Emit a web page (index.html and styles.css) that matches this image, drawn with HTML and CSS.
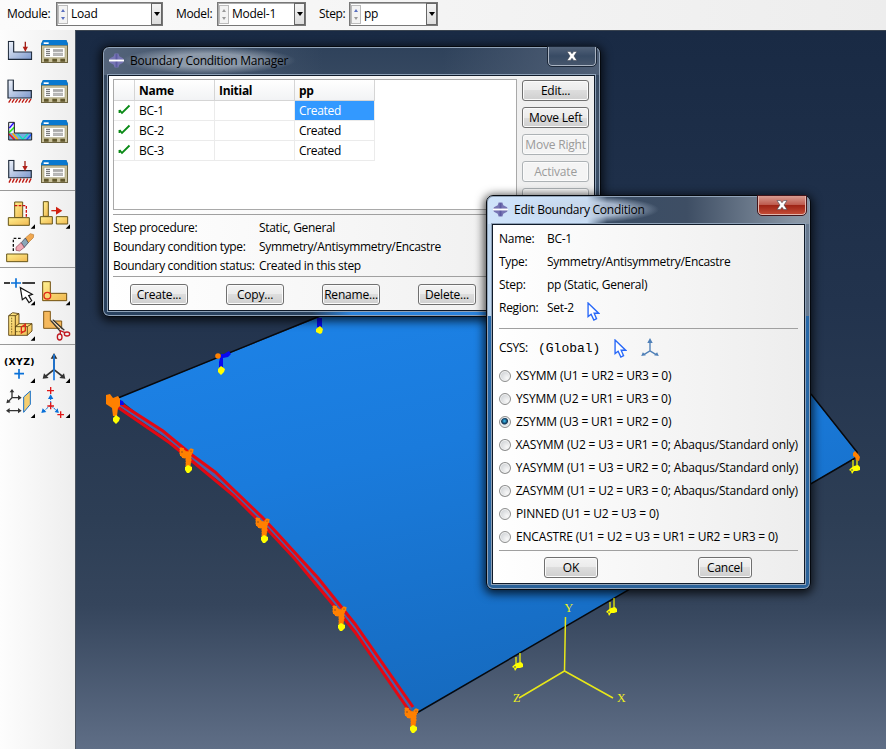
FILE: index.html
```html
<!DOCTYPE html>
<html lang="en">
<head>
<meta charset="utf-8">
<title>Boundary Conditions</title>
<link rel="stylesheet" href="styles.css">
</head>
<body>
<svg class="defs" width="0" height="0" aria-hidden="true">
  <defs>
    <linearGradient id="steel" x1="0" y1="0" x2="1" y2="1"><stop offset="0" stop-color="#f0f4fb"/><stop offset="1" stop-color="#7c98cc"/></linearGradient>
    <linearGradient id="gold" x1="0" y1="0" x2="1" y2="1"><stop offset="0" stop-color="#fff090"/><stop offset="1" stop-color="#f0b850"/></linearGradient>
    <symbol id="manager" viewBox="0 0 81 69">
      <path d="M0 12L6 0H76L81 12V69H0Z" fill="#6c6440"/><path d="M0 12L6 0H76L81 12V16H0Z" fill="#0878d0"/><path d="M8 7h15v5H8z" fill="#fff"/>
      <path d="M3 17h75v49H3z" fill="#c8c09c"/><path d="M9 22h63v31H9z" fill="#fff" stroke="#a8a078" stroke-width="2"/>
      <path d="M15 28h12M15 34h12M15 40h12M15 46h12" stroke="#444" stroke-width="2.500"/><path d="M36 27h30v6H36zM36 38h30v6H36z" fill="#b4b4b4"/><path d="M36 34h30M36 46h30" stroke="#777" stroke-width="2"/>
      <path d="M9 56h14v9H9zM34 56h14v9H34zM58 56h14v9H58z" fill="#60572c"/>
    </symbol>
    <symbol id="bracket" viewBox="0 0 74 60"><path d="M2 2H18V34H72V56H2Z" fill="url(#steel)" stroke="#1c2838" stroke-width="3.5"/></symbol>
    <symbol id="logo" viewBox="0 0 16 16"><path d="M6 0.500h4l1 3 4 2 1 2.500-1 2.500-4 2-1 3H6l-1-3-4-2L0 8l1-2.500 4-2z" fill="#7775b4"/><path d="M7 1h2v14H7z" fill="#5d5aa2"/><path d="M0 7h16v2H0z" fill="#fff"/></symbol>
    <symbol id="pick" viewBox="0 0 38 56"><path d="M3 3V43L12 36L20 53L28 49L21 33H34Z" fill="#fff" stroke="#2868f8" stroke-width="4"/></symbol>
    <symbol id="bc" viewBox="-14 -12 28 30" overflow="visible">
      <path d="M-7-8L-4-8-2-5 1-4 3-7 6-7 6-4 4-1 4 5 3 10-1 10-1 2-4 2-7-1Z" fill="#ff8000" stroke="#ff8000" stroke-width="1" stroke-dasharray="2 .7"/>
      <circle cx="-5" cy="-4" r=".7" fill="#704020"/><circle cx="4" cy="-5" r=".6" fill="#704020"/>
      <path d="M-2 11L1 9 5 11 5 14 2 17 0 17-2 14Z" fill="#ff0"/>
    </symbol>
    <symbol id="load" viewBox="-6 0 12 20" overflow="visible"><path d="M-2 4V12M2 0V11" stroke="#ff0" stroke-width="1.200"/><path d="M-1 10L3 9 5 11 5 14 2 15-1 15-3 18-4 15-6 14-4 12Z" fill="#ff0"/><path d="M-4 13.500h2v1h-2z" fill="#44506a"/></symbol>
  </defs>
</svg>
<div class="app">
  <header class="context">
    <span class="label module">Module:</span>
    <div class="combo combo-module"><span class="spin"><i class="up"></i><i class="down"></i></span><span class="value">Load</span><span class="drop"></span></div>
    <span class="label model">Model:</span>
    <div class="combo combo-model"><span class="spin off"><i class="up"></i><i class="down"></i></span><span class="value">Model-1</span><span class="drop"></span></div>
    <span class="label step">Step:</span>
    <div class="combo combo-step"><span class="spin last"><i class="up"></i><i class="down"></i></span><span class="value">pp</span><span class="drop"></span></div>
  </header>
  <main class="work">
    <nav class="tools">
      <div class="group tall">
        <svg viewBox="0 0 108 120"><use href="#bracket" x="23" y="32" width="74" height="60"/><path d="M76 35V56" stroke="#a02018" stroke-width="4"/><path d="M68 50H84L76 65Z" fill="#b02018"/></svg>
        <svg viewBox="108 0 117 120"><use href="#manager" x="123" y="30" width="81" height="69"/></svg>
        <svg viewBox="0 0 108 120"><use href="#bracket" x="21" y="28" width="76" height="60"/><path d="M33 87L26 98M43 87L36 98M53 87L46 98M63 87L56 98M73 87L66 98M83 87L76 98M93 87L86 98" stroke="#c01810" stroke-width="4"/></svg>
        <svg viewBox="108 0 117 120"><use href="#manager" x="123" y="30" width="81" height="69"/></svg>
        <svg viewBox="0 0 108 120"><path d="M26 37H43V69H95V90H26Z" fill="#78a8e0"/><path d="M26 37H43V69H26Z" fill="#e8f0ff"/><path d="M28 54L42 38" stroke="#20f" stroke-width="4"/><path d="M27 68L43 52" stroke="#30f020" stroke-width="5"/><path d="M27 72L44 89" stroke="#f01818" stroke-width="5"/><path d="M38 70L54 89" stroke="#ffb000" stroke-width="5"/><path d="M53 71L68 88L84 71" fill="none" stroke="#00e8b8" stroke-width="4"/><path d="M80 89L95 72" stroke="#1850ff" stroke-width="4"/><path d="M26 37H43V69H95V90H26Z" fill="none" stroke="#222" stroke-width="3"/></svg>
        <svg viewBox="108 0 117 120"><use href="#manager" x="123" y="30" width="81" height="69"/></svg>
        <svg viewBox="0 0 108 120"><use href="#bracket" x="23" y="29" width="74" height="58"/><path d="M75 33V52" stroke="#a02018" stroke-width="4"/><path d="M67 48H83L75 63Z" fill="#b02018"/><path d="M33 86L27 98M43 86L37 98M53 86L47 98M63 86L57 98M73 86L67 98M83 86L77 98M93 86L87 98" stroke="#c01810" stroke-width="4"/></svg>
        <svg viewBox="108 0 117 120"><use href="#manager" x="123" y="30" width="81" height="69"/></svg>
      </div>
      <div class="group">
        <svg viewBox="0 18 108 114"><g fill="url(#gold)" stroke="#665518" stroke-width="3"><path d="M44 51H68V98H44Z"/><path d="M25 98H88V121H25Z"/></g><path d="M44 62H79V97" fill="none" stroke="#d01010" stroke-width="4" stroke-dasharray="8 4"/><path d="M105 118V131H92Z"/></svg>
        <svg viewBox="108 18 117 114"><g fill="url(#gold)" stroke="#665518" stroke-width="3"><path d="M130 50H145V94H130Z"/><path d="M121 95H157V117H121Z"/><path d="M169 95H203V117H169Z"/></g><path d="M154 77H172" stroke="#d02010" stroke-width="4"/><path d="M168 65L187 77L168 89Z" fill="#d02010"/><path d="M210 118V131H197Z"/></svg>
        <svg viewBox="0 132 108 114"><path d="M20 207H83V230H20Z" fill="url(#gold)" stroke="#665518" stroke-width="3"/><path d="M40 198V160H64" fill="none" stroke="#111" stroke-width="4" stroke-dasharray="8 5"/><path d="M76 159L91 146L101 149L100 158L84 174Z" fill="#f0a850" stroke="#b87830" stroke-width="2"/><path d="M64 173L76 159L85 173L72 188Z" fill="#8aa6b8" stroke="#334" stroke-width="2"/><path d="M48 187L63 173L73 187L59 198L48 196Z" fill="#f0a8b4" stroke="#884050" stroke-width="2"/></svg>
      </div>
      <div class="group">
        <svg viewBox="0 249 108 114"><path d="M12 294H30M67 294H105" stroke="#000" stroke-width="4"/><path d="M33 294H63M48 280V308" stroke="#0870d8" stroke-width="5"/><path d="M61 308L67 344L77 337L87 353L95 347L86 332L97 328Z" fill="#fff" stroke="#111" stroke-width="3.500"/><path d="M105 348V361H92Z"/></svg>
        <svg viewBox="108 249 117 114"><path d="M128 290H151V325H200V347H128Z" fill="url(#gold)" stroke="#705010" stroke-width="3"/><circle cx="142" cy="332" r="10" fill="none" stroke="#e02818" stroke-width="4"/><path d="M210 348V361H197Z"/></svg>
        <svg viewBox="0 363 108 114"><g fill="url(#gold)" stroke="#503808" stroke-width="2.500"><path d="M46 424L57 416H96V438L82 451H46Z"/><path d="M26 392L38 383L57 386V416L46 425V451H26Z"/><path d="M26 392H46V425H82V451M46 392L57 386M82 425L96 416" fill="none"/></g><path d="M35 398V448M48 440H76" stroke="#503808" stroke-width="2" stroke-dasharray="5 3"/><path d="M64 444V426L76 418V437Z" fill="none" stroke="#e02818" stroke-width="4"/><path d="M105 454V467H92Z"/></svg>
        <svg viewBox="108 363 117 114"><path d="M131 379H151V408H185V430H131Z" fill="#f5b85c" stroke="#805818" stroke-width="3"/><path d="M154 408L181 439M158 404L193 436" stroke="#333" stroke-width="4"/><path d="M156 406L188 437" stroke="#ddd" stroke-width="3"/><g fill="none" stroke="#c01820" stroke-width="4"><ellipse cx="179" cy="456" rx="7" ry="9"/><ellipse cx="201" cy="447" rx="8" ry="6"/><path d="M181 447V437L195 443"/></g></svg>
      </div>
      <div class="group last">
        <svg viewBox="0 480 108 114"><text class="xyz" x="12" y="541">(XYZ)</text><path d="M43 566H72M57 552V581" stroke="#0870d8" stroke-width="5"/><path d="M105 580V594H91Z"/></svg>
        <svg viewBox="108 480 117 114"><g stroke="#333" stroke-width="5"><path d="M162 554L134 576M162 554L190 576M162 510V554"/></g><path d="M152 521L162 504L172 521ZM128 581L132 565L146 579ZM196 581L178 579L192 565Z" fill="#333"/><path d="M162 508V586" stroke="#1878e0" stroke-width="5"/><path d="M210 580V594H197Z"/></svg>
        <svg viewBox="0 594 108 114"><g stroke="#333" stroke-width="4" fill="none"><path d="M36 619V638L25 650M36 638H55M25 677H58"/></g><path d="M29 622L36 612L43 622ZM54 630L65 638L54 646ZM19 655L22 643L32 652ZM18 677L29 669V685ZM65 677L54 669V685Z" fill="#333"/><path d="M71 636L91 618V658L71 682Z" fill="#f5ce70" stroke="#1870c8" stroke-width="3"/><path d="M105 686V699H92Z"/></svg>
        <svg viewBox="108 594 117 114"><path d="M152 637V660L132 678M152 662L177 682" fill="none" stroke="#0870d8" stroke-width="3" stroke-dasharray="8 3"/><path d="M144 642L152 628L160 642ZM124 684L128 670L139 681ZM176 684L164 681L173 670Z" fill="#0870d8"/><path d="M141 617H162M152 606V627M142 663H162M152 652V673M172 689H192M182 679V699" stroke="#e01818" stroke-width="4"/><path d="M210 686V699H197Z"/></svg>
      </div>
    </nav>
    <section class="viewport">
      <svg class="scene" viewBox="75 30 811 719">
        <defs><linearGradient id="plate" x1="0" y1="0" x2=".35" y2="1"><stop offset="0" stop-color="#1e86ec"/><stop offset=".5" stop-color="#1a7bdc"/><stop offset="1" stop-color="#166bc0"/></linearGradient></defs>
        <path d="M118 398L320 317 480 253 700 260 811 394 856 452 856 457 415 715 411 708 355 628 318 582 277 537 215 476 163 434Z" fill="url(#plate)"/>
        <path d="M118 398L320 316M811 394L857 452V457L415 714" fill="none" stroke="#08090c" stroke-width="1.500"/>
        <path d="M118 404L166 436 192 458 224 483 265 524 286 546 327 593 355 628 411 709" fill="none" stroke="#4a60a8" stroke-width="3"/>
        <g fill="none" stroke="#e40812" stroke-width="3"><path d="M118 402L163 431 192 455 215 472 262 517 277 533 318 578 355 624 413 707"/><path d="M116 406L170 443 192 461 233 495 268 530 295 559 335 607 355 632 410 712"/></g>
        <path d="M221 354L224 354 229 351 231 354 228 357 223 358 223 367 219 367 219 362ZM317 318h5v9h-5zM119 400l4 1 1 4-5 0z" fill="#0808f0"/>
        <circle cx="218" cy="356" r="2.800" fill="#ff8000"/>
        <path d="M218 369L221 366 225 369 224 372 221 375 218 372ZM316 329L320 326 323 329 322 333 320 334 316 332Z" fill="#ff0"/>
        <path d="M106 395L110 394 113 398 118 396 120 399 120 406 118 408 117 416 113 416 112 408 106 404Z" fill="#ff8000"/><path d="M113 418L116 415 120 418 119 421 116 424 113 421Z" fill="#ff0"/>
        <use href="#bc" x="173" y="444" width="28" height="30"/><use href="#bc" x="249" y="514" width="28" height="30"/><use href="#bc" x="326" y="602" width="28" height="30"/><use href="#bc" x="398" y="704" width="28" height="30"/>
        <use href="#load" x="512" y="653" width="12" height="20"/><use href="#load" x="606" y="598" width="12" height="20"/><use href="#load" x="849" y="456" width="12" height="20"/>
        <path d="M853 453L855 451 858 454 860 457 859 461 856 460 855 457 853 456Z" fill="#ff8000"/>
        <path d="M565.500 617L564.500 671 519 698M564.500 671L613 698" fill="none" stroke="#e8e818" stroke-width="1.500"/>
        <g class="axis"><text x="564.500" y="612">Y</text><text x="617" y="702">X</text><text x="513" y="702">Z</text></g>
      </svg>
    </section>
  </main>

  <section class="window manager">
    <div class="title"><svg class="logo"><use href="#logo"/></svg><h2>Boundary Condition Manager</h2><button class="close" aria-label="Close"><svg viewBox="0 0 10 9"><path d="M0.500 0.500H3.500L5 2.500 6.500 0.500H9.500L6.800 4.500 9.500 8.500H6.500L5 6.500 3.500 8.500H0.500L3.200 4.500Z"/></svg></button></div>
    <div class="body">
      <div class="upper">
        <div class="list">
          <div class="grid">
            <b></b><b>Name</b><b>Initial</b><b>pp</b>
            <span class="tick"><svg viewBox="0 0 12 12"><path d="M1 6L3.500 9 11 1.500" /><path d="M1 6V9" /></svg></span><span>BC-1</span><span></span><span class="sel">Created</span>
            <span class="tick"><svg viewBox="0 0 12 12"><path d="M1 6L3.500 9 11 1.500" /><path d="M1 6V9" /></svg></span><span>BC-2</span><span></span><span>Created</span>
            <span class="tick"><svg viewBox="0 0 12 12"><path d="M1 6L3.500 9 11 1.500" /><path d="M1 6V9" /></svg></span><span>BC-3</span><span></span><span>Created</span>
          </div>
        </div>
        <div class="side"><button>Edit...</button><button>Move Left</button><button class="dim">Move Right</button><button class="dim">Activate</button><button class="dim" aria-label="Deactivate"></button></div>
      </div>
      <dl class="facts"><dt>Step procedure:</dt><dd>Static, General</dd><dt>Boundary condition type:</dt><dd>Symmetry/Antisymmetry/Encastre</dd><dt>Boundary condition status:</dt><dd>Created in this step</dd></dl>
      <div class="actions"><button>Create...</button><button>Copy...</button><button>Rename...</button><button>Delete...</button></div>
    </div>
  </section>

  <section class="window editor">
    <div class="title"><svg class="logo"><use href="#logo"/></svg><h2>Edit Boundary Condition</h2><button class="close" aria-label="Close"><svg viewBox="0 0 10 9"><path d="M0.500 0.500H3.500L5 2.500 6.500 0.500H9.500L6.800 4.500 9.500 8.500H6.500L5 6.500 3.500 8.500H0.500L3.200 4.500Z"/></svg></button></div>
    <div class="body">
      <dl class="props"><dt>Name:</dt><dd>BC-1</dd><dt>Type:</dt><dd>Symmetry/Antisymmetry/Encastre</dd><dt>Step:</dt><dd>pp (Static, General)</dd><dt>Region:</dt><dd>Set-2 <svg class="pick"><use href="#pick"/></svg></dd></dl>
      <div class="csys"><span>CSYS:</span><code>(Global)</code><svg class="pick"><use href="#pick"/></svg><svg class="triad" viewBox="0 0 52 56"><path d="M26 10V38L8 49M26 38L44 49" fill="none" stroke="#5080b8" stroke-width="4"/><path d="M18 15L26 0 34 15ZM0 53L5 42 14 51ZM52 53L38 51 47 42Z" fill="#5080b8"/></svg></div>
      <div class="options">
        <label><i></i><span>XSYMM (U1 = UR2 = UR3 = 0)</span></label>
        <label><i></i><span>YSYMM (U2 = UR1 = UR3 = 0)</span></label>
        <label><i class="on"></i><span>ZSYMM (U3 = UR1 = UR2 = 0)</span></label>
        <label><i></i><span>XASYMM (U2 = U3 = UR1 = 0; Abaqus/Standard only)</span></label>
        <label><i></i><span>YASYMM (U1 = U3 = UR2 = 0; Abaqus/Standard only)</span></label>
        <label><i></i><span>ZASYMM (U1 = U2 = UR3 = 0; Abaqus/Standard only)</span></label>
        <label><i></i><span>PINNED (U1 = U2 = U3 = 0)</span></label>
        <label><i></i><span>ENCASTRE (U1 = U2 = U3 = UR1 = UR2 = UR3 = 0)</span></label>
      </div>
      <div class="confirm"><button>OK</button><button>Cancel</button></div>
    </div>
  </section>
</div>
</body>
</html>
```
FILE: styles.css
```css
* { box-sizing: border-box; }
body { margin: 0; font: 12px/16px "Open Sans", "Noto Sans", sans-serif; letter-spacing: -.33px; color: #000; }
h2, dl, dd, dt { margin: 0; font: inherit; }
.defs { position: absolute; }
.app { position: relative; width: 886px; height: 749px; overflow: hidden; display: flex; flex-direction: column; }

.context { height: 30px; flex: none; display: flex; align-items: flex-start; padding-top: 2px; background: linear-gradient(90deg, #fbfbfb, #ededed); }
.label { line-height: 23px; white-space: nowrap; }
.module { width: 49px; margin-left: 7px; }
.model { width: 41px; margin-left: 13px; }
.step { width: 30px; margin-left: 13px; }
.combo { height: 24px; display: flex; background: #fff; border: 1px solid #777; box-shadow: inset 1px 1px #aaa; }
.combo-module { width: 107px; }
.combo-model { width: 89px; }
.combo-step { width: 89px; }
.spin { width: 10px; margin: 2px 0 1px 1px; border: 1px solid #bbb; display: flex; flex-direction: column; justify-content: space-around; align-items: center; background: #f3f3f3; }
.spin i { border: 2.5px solid transparent; }
.spin .up { border-top: 0; border-bottom: 3px solid #5a70c0; }
.spin .down { border-bottom: 0; border-top: 3px solid #5a70c0; }
.spin.off .up { border-bottom-color: #999; }
.spin.off .down, .spin.last .down { border-top-color: #999; }
.value { flex: 1; padding-left: 3px; line-height: 22px; letter-spacing: -.25px; }
.drop { width: 11px; border: 1px solid #666; background: linear-gradient(#f4f4f4, #ddd); display: flex; align-items: center; justify-content: center; }
.drop::after { content: ""; border: 3.500px solid transparent; border-top: 4px solid #000; border-bottom: 0; }

.work { flex: 1; display: flex; min-height: 0; }
.tools { width: 75px; flex: none; background: linear-gradient(90deg, #fdfdfd, #eee); }
.group { height: 77px; display: grid; grid-template-columns: 36px 39px; grid-auto-rows: 38px; border-bottom: 1px solid #999; }
.group.tall { height: 161px; grid-auto-rows: 40px; }
.group.last { border: 0; }
.group svg { width: 100%; height: 100%; overflow: visible; }
.xyz { font: bold 28px "DejaVu Sans", sans-serif; letter-spacing: 1px; }
.viewport { flex: 1; border-left: 1px solid #4b5460; border-top: 1px solid #3a4450; background: linear-gradient(#192a44 0, #22334d 38%, #2d3e55 68%, #35455c 80%, #5f6e86 100%); }
.scene { display: block; width: 811px; height: 719px; margin: -1px 0 0 -1px; }
.axis { fill: #f0f020; font: 12px "Liberation Serif", serif; letter-spacing: 0; }

.window { position: absolute; display: flex; flex-direction: column; padding: 0 5px 5px; border: 1px solid #05090f; border-radius: 7px; box-shadow: inset 0 0 0 1px #91a3b8, 0 2px 10px 2px rgba(0,0,0,.75); }
.manager { left: 102px; top: 46px; width: 499px; height: 271px; background: linear-gradient(90deg, transparent 42%, #2a83dc 50%) 0 100%/100% 6px no-repeat, linear-gradient(90deg, #54647a, transparent 220px, transparent 340px, #4f5f76) 0 0/100% 28px no-repeat, linear-gradient(#2f425b, #405269 80px, #29415e); }
.editor { left: 486px; top: 195px; width: 325px; height: 395px; background: linear-gradient(90deg, #cfe3fa 0, #c8def6 100px, #3a4d65 120px, #3e4e64 200px, #8996a5 310px) 0 0/100% 28px no-repeat, linear-gradient(90deg, #bed6ee 0 50%, #687a90 50%) 0 28px/100% 92px no-repeat, linear-gradient(#256bb0, #2b6299); }
.title { height: 28px; flex: none; display: flex; align-items: flex-start; }
.logo { width: 15px; height: 15px; margin: 6px 0 0 1px; }
.title h2 { line-height: 27px; padding: 0 8px; margin-left: -2px; margin-right: auto; white-space: nowrap; letter-spacing: -.26px; background: radial-gradient(ellipse closest-side, rgba(180,190,202,.65) 50%, transparent); }
.editor h2 { padding-right: 14px; background: radial-gradient(ellipse closest-side, rgba(200,215,235,.75) 55%, transparent); }
.close { width: 48px; height: 19px; padding: 0; border: 1px solid #aab4c2; border-top: 0; border-radius: 0 0 4px 4px; background: linear-gradient(#526279, #384b64 50%, #46566c); outline: 1px solid #1b2738; }
.manager .close { margin-right: -1px; }
.editor .close { background: linear-gradient(#d99b90, #bd5b4e 48%, #9e2415 52%, #c14a35); border-color: #e3b7ae; outline-color: #43151a; margin-right: -1px; }
.close svg { display: block; width: 12px; height: 10px; margin: -1px auto 0; fill: #fff; stroke: #38404c; stroke-width: .5; overflow: visible; }
.body { flex: 1; display: flex; flex-direction: column; border: 1px solid #101b2a; outline: 1px solid #8ea1b7; background: linear-gradient(90deg, #fff, #ededed); }

.body button { height: 21px; padding: 0; border: 1px solid #707070; border-radius: 3px; background: linear-gradient(#f3f3f3, #ebebeb 50%, #ddd 50%, #cfcfcf); box-shadow: inset 0 0 0 1px #fbfbfb; font: inherit; letter-spacing: -.2px; line-height: 18px; white-space: nowrap; }
.body button.dim { color: #9b9b9b; border-color: #adb2b5; background: #f4f4f4; }
.manager .body { padding: 3px 5px 0 4px; }
.upper { height: 136px; flex: none; display: flex; gap: 5px; overflow: hidden; border-bottom: 1px solid #a0a0a0; }
.list { width: 405px; height: 131px; border: 1px solid #a9a9a9; background: #fff; }
.grid { width: 261px; display: grid; grid-template-columns: 21px 80px 80px 80px; grid-template-rows: 21px repeat(3, 20px); }
.grid > * { border-right: 1px solid #ebebeb; border-bottom: 1px solid #ebebeb; padding-left: 4px; line-height: 19px; }
.grid b { border-color: #d5d5d5; background: linear-gradient(#fff, #f2f3f5); letter-spacing: -.3px; line-height: 21px; }
.grid .sel { background: #3399ff; color: #fff; }
.grid .tick { padding: 3px 4px; }
.tick svg { display: block; width: 13px; height: 12px; fill: none; stroke: #0a8a16; stroke-width: 1.800; }
.side { width: 67px; display: flex; flex-direction: column; gap: 6px; padding-top: 1px; }
.side button { flex: none; }
.facts { display: grid; grid-template-columns: 146px 1fr; grid-auto-rows: 19px; line-height: 19px; padding-top: 3px; height: 62px; border-bottom: 1px solid #a0a0a0; white-space: nowrap; }
.facts dt { letter-spacing: -.35px; }
.actions { display: flex; gap: 38px; padding: 7px 0 0 17px; }
.actions button { width: 58px; }

.editor .body { padding: 2px 6px 0; }
.props { display: grid; grid-template-columns: 48px 1fr; grid-auto-rows: 23px; line-height: 23px; height: 102px; flex: none; border-bottom: 1px solid #a0a0a0; white-space: nowrap; letter-spacing: -.28px; }
.props dd { display: flex; }
.pick { width: 13px; height: 19px; margin: 6px 0 0 13px; }
.csys { height: 35px; flex: none; display: flex; line-height: 37px; }
.csys span { width: 39px; }
.csys code { font: 13px/39px "Liberation Mono", monospace; letter-spacing: 0; width: 63px; white-space: nowrap; }
.csys .pick { margin: 10px 0 0 13px; }
.triad { width: 18px; height: 19px; margin: 9px 0 0 14px; }
.options { height: 187px; flex: none; border-bottom: 1px solid #a0a0a0; letter-spacing: -.17px; }
.options label { height: 23px; display: flex; align-items: center; gap: 5px; white-space: nowrap; }
.options i { width: 12px; height: 12px; border-radius: 50%; border: 1px solid #8e8f8f; background: radial-gradient(circle at 70% 70%, #f8f8f8, #c4c8cc); box-shadow: inset 0 0 0 1px #f3f3f3; }
.options i.on { background: radial-gradient(circle at 45% 40%, #40c8f8 0, #13466e 2.500px, #173650 3px, #e0e5e8 4px); }
.confirm { display: flex; gap: 100px; padding: 6px 0 0 45px; }
.confirm button { width: 54px; }
```
